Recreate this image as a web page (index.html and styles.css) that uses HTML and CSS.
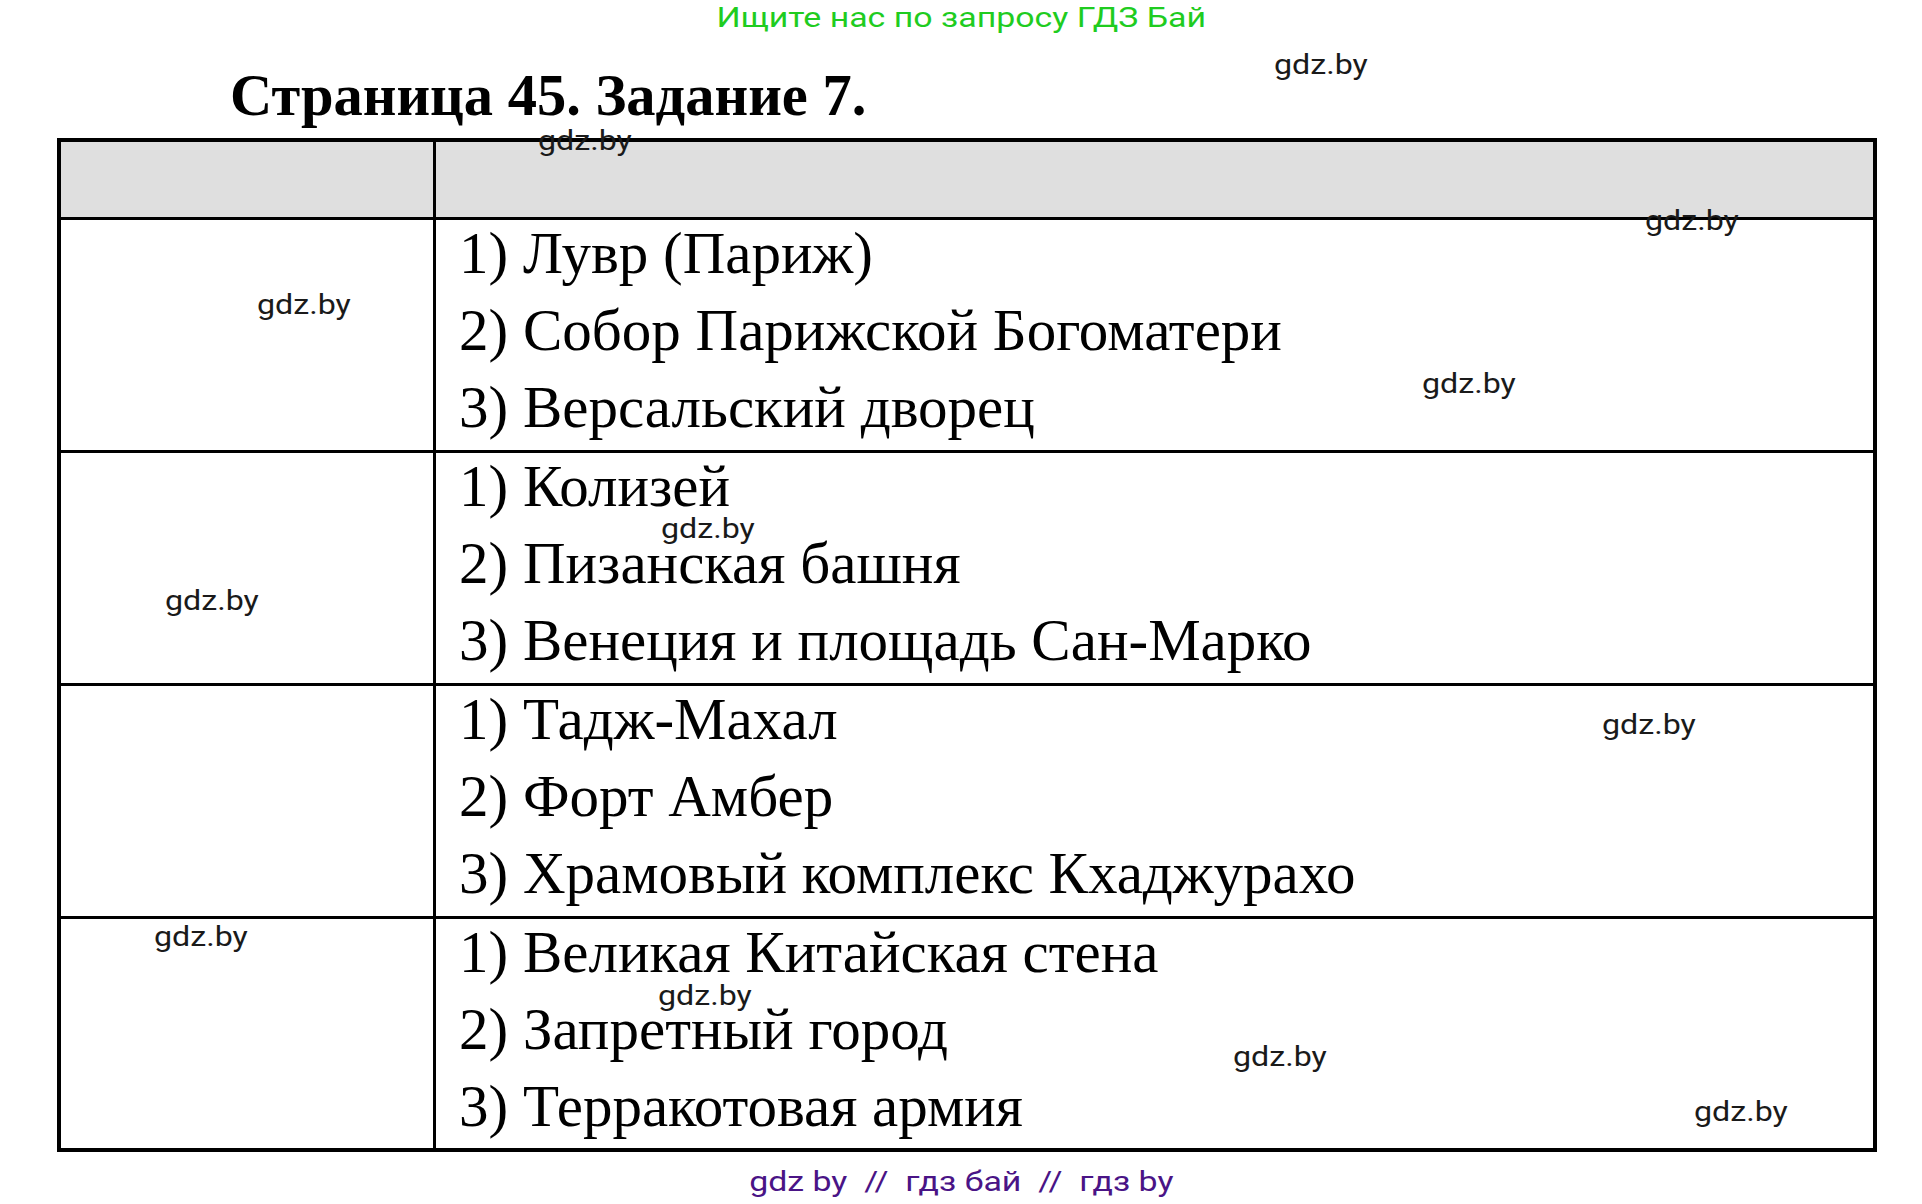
FILE: index.html
```html
<!DOCTYPE html>
<html lang="ru">
<head>
<meta charset="utf-8">
<title>Страница 45. Задание 7.</title>
<link rel="stylesheet" href="styles.css">
</head>
<body>
<div class="page">
  <div class="banner"><span class="stretch">Ищите нас по запросу ГДЗ Бай</span></div>
  <h1 class="title">Страница 45. Задание 7.</h1>
  <div class="grid">
    <div class="row head">
      <div class="cell left"></div>
      <div class="cell right"></div>
    </div>
    <div class="row">
      <div class="cell left"></div>
      <div class="cell right">
        <div class="items">
          <div>1) Лувр (Париж)</div>
          <div>2) Собор Парижской Богоматери</div>
          <div>3) Версальский дворец</div>
        </div>
      </div>
    </div>
    <div class="row">
      <div class="cell left"></div>
      <div class="cell right">
        <div class="items">
          <div>1) Колизей</div>
          <div>2) Пизанская башня</div>
          <div>3) Венеция и площадь Сан-Марко</div>
        </div>
      </div>
    </div>
    <div class="row">
      <div class="cell left"></div>
      <div class="cell right">
        <div class="items">
          <div>1) Тадж-Махал</div>
          <div>2) Форт Амбер</div>
          <div>3) Храмовый комплекс Кхаджурахо</div>
        </div>
      </div>
    </div>
    <div class="row last">
      <div class="cell left"></div>
      <div class="cell right">
        <div class="items">
          <div>1) Великая Китайская стена</div>
          <div>2) Запретный город</div>
          <div>3) Терракотовая армия</div>
        </div>
      </div>
    </div>
  </div>
  <div class="footer"><span class="stretch">gdz by&nbsp;&nbsp;//&nbsp;&nbsp;гдз бай&nbsp;&nbsp;//&nbsp;&nbsp;гдз by</span></div>

  <span class="wm w1">gdz.by</span>
  <span class="wm w2">gdz.by</span>
  <span class="wm w3">gdz.by</span>
  <span class="wm w4">gdz.by</span>
  <span class="wm w5">gdz.by</span>
  <span class="wm w6">gdz.by</span>
  <span class="wm w7">gdz.by</span>
  <span class="wm w8">gdz.by</span>
  <span class="wm w9">gdz.by</span>
  <span class="wm w10">gdz.by</span>
  <span class="wm w11">gdz.by</span>
  <span class="wm w12">gdz.by</span>
</div>
</body>
</html>
```

FILE: styles.css
```css
html, body {
  margin: 0;
  padding: 0;
  background: #ffffff;
}

.page {
  position: relative;
  width: 1922px;
  height: 1204px;
  overflow: hidden;
}

.stretch {
  display: inline-block;
  transform: scaleX(1.21);
  transform-origin: center;
  white-space: nowrap;
}

.banner {
  padding-top: 1px;
  text-align: center;
  font-family: Roboto, "Noto Sans", sans-serif;
  font-size: 28px;
  line-height: 33px;
  height: 33px;
  color: #1fcc1f;
}

.title {
  margin: 29px 0 10px 230px;
  font-family: "Liberation Serif", "Times New Roman", serif;
  font-weight: bold;
  font-size: 58.5px;
  line-height: 65px;
  color: #000;
}

.grid {
  margin: 0 0 0 57px;
  width: 1820px;
  box-sizing: border-box;
  border: 4px solid #000;
}

.row {
  display: grid;
  grid-template-columns: 375px 1fr;
  height: 233px;
  border-top: 3px solid #000;
  box-sizing: border-box;
}

.row.head {
  height: 75px;
  border-top: 0;
  background: #dfdfdf;
}

.row.last {
  height: 232px;
}

.cell.left {
  border-right: 3px solid #000;
}

.cell.right {
  padding-left: 23px;
  overflow: hidden;
}

.items {
  margin-top: -5px;
  font-family: "Liberation Serif", "Times New Roman", serif;
  font-size: 59px;
  line-height: 77px;
  color: #000;
  white-space: nowrap;
}

.footer {
  margin-top: 14px;
  text-align: center;
  font-family: Roboto, "Noto Sans", sans-serif;
  font-size: 28px;
  line-height: 32px;
  color: #4a1486;
}

.wm {
  position: absolute;
  font-family: Roboto, "Noto Sans", sans-serif;
  font-size: 28px;
  line-height: 32px;
  color: #1a1a1a;
  white-space: nowrap;
  transform: scaleX(1.15);
  transform-origin: left center;
}

.w1 { left: 1274px; top: 49px; }
.w2 { left: 538px; top: 125px; }
.w3 { left: 1645px; top: 205px; }
.w4 { left: 257px; top: 289px; }
.w5 { left: 1422px; top: 368px; }
.w6 { left: 661px; top: 513px; }
.w7 { left: 165px; top: 585px; }
.w8 { left: 1602px; top: 709px; }
.w9 { left: 154px; top: 921px; }
.w10 { left: 658px; top: 980px; }
.w11 { left: 1233px; top: 1041px; }
.w12 { left: 1694px; top: 1096px; }
```
